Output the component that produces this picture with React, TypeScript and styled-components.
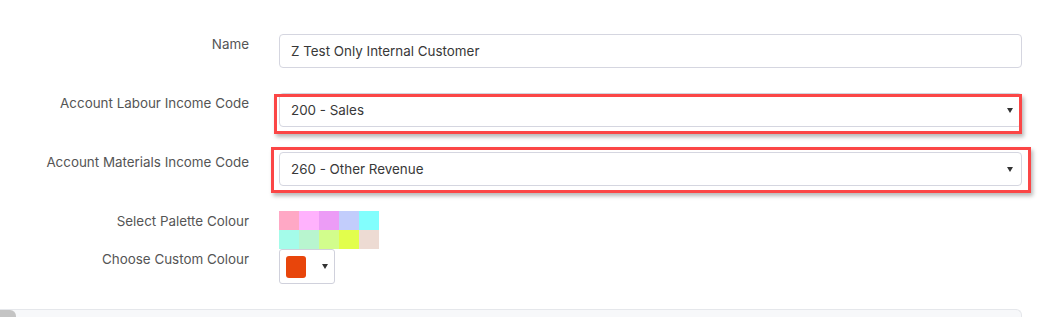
import styled, { createGlobalStyle } from 'styled-components';

const GlobalStyle = createGlobalStyle`
  body {
    margin: 0;
    background: #ffffff;
    font-family: Inter, "Noto Sans", "Liberation Sans", sans-serif;
  }
`;

const StyledPage = styled.div`
  width: 1038px;
  height: 317px;
  overflow: hidden;
  display: flex;
  flex-direction: column;
`;

const StyledForm = styled.form`
  padding: 34px 16px 0 0;
  display: flex;
  flex-direction: column;
  gap: 25px;
`;

const StyledRow = styled.div`
  display: grid;
  grid-template-columns: 249px 1fr;
  column-gap: 30px;
  align-items: start;
`;

const StyledStack = styled.div`
  display: flex;
  flex-direction: column;
`;

const StyledLabel = styled.label`
  font-size: 13.4px;
  line-height: 20px;
  color: #555555;
  text-align: right;
  white-space: nowrap;
`;

const StyledField = styled.div`
  position: relative;
  height: 34px;
  box-sizing: border-box;
  border: 1px solid #d5d6e0;
  border-radius: 4px;
  background: #fff;
  display: flex;
  align-items: center;
  padding: 0 11px;
  font-size: 13.4px;
  color: #383838;
`;

const StyledValue = styled.span`
  flex: 1;
`;

const StyledCaret = styled.span`
  width: 0;
  height: 0;
  border-left: 3.5px solid transparent;
  border-right: 3.5px solid transparent;
  border-top: 5px solid #333;
  margin-right: -3px;
`;

const StyledHighlight = styled.div<{ $l: number; $t: number; $r: number; $b: number }>`
  position: absolute;
  left: ${(p) => p.$l}px;
  top: ${(p) => p.$t}px;
  right: ${(p) => p.$r}px;
  bottom: ${(p) => p.$b}px;
  border: 3px solid #fb4646;
  box-shadow: 2px 3px 4px rgba(0, 0, 0, 0.28);
  pointer-events: none;
`;

const StyledPalette = styled.div`
  display: grid;
  grid-template-columns: repeat(5, 20px);
  grid-auto-rows: 19px;
`;

const StyledSwatch = styled.div<{ $color: string }>`
  background: ${(p) => p.$color};
`;

const StyledColourButton = styled.div`
  width: 56px;
  height: 35px;
  box-sizing: border-box;
  border: 1px solid #d0d1dc;
  border-radius: 3px;
  display: flex;
  align-items: center;
  padding: 0 0 0 6px;
  gap: 16px;
`;

const StyledChip = styled.div`
  width: 20px;
  height: 22px;
  background: #e8450b;
  border-radius: 3px;
`;

const StyledFooter = styled.div`
  margin-top: auto;
  height: 8px;
  width: 1022px;
  box-sizing: border-box;
  background: #f7f8fa;
  border-top: 1px solid #e5e7eb;
  border-right: 1px solid #e5e7eb;
  border-top-right-radius: 6px;
  position: relative;
`;

const StyledThumb = styled.div`
  position: absolute;
  left: 0;
  top: 0;
  width: 16px;
  height: 10px;
  background: #c4c4c4;
  border-top-right-radius: 6px;
`;

const palette = [
  '#ffa8c5', '#ffb2fd', '#ec9cf6', '#c2cdfc', '#82fefd',
  '#a4fcea', '#b8f5cf', '#d2fd8c', '#e2fe4c', '#eddbd3',
];

const App = () => {
  return (
    <StyledPage>
      <GlobalStyle />
      <StyledForm>
        <StyledRow>
          <StyledLabel>Name</StyledLabel>
          <StyledField>
            <StyledValue>Z Test Only Internal Customer</StyledValue>
          </StyledField>
        </StyledRow>
        <StyledRow>
          <StyledLabel>Account Labour Income Code</StyledLabel>
          <StyledField>
            <StyledValue>200 - Sales</StyledValue>
            <StyledCaret />
            <StyledHighlight $l={-6} $t={0} $r={-1} $b={-8} />
          </StyledField>
        </StyledRow>
        <StyledRow>
          <StyledLabel>Account Materials Income Code</StyledLabel>
          <StyledField>
            <StyledValue>260 - Other Revenue</StyledValue>
            <StyledCaret />
            <StyledHighlight $l={-9} $t={-6} $r={-10} $b={-8} />
          </StyledField>
        </StyledRow>
        <StyledRow>
          <StyledStack>
            <StyledLabel>Select Palette Colour</StyledLabel>
            <StyledLabel style={{ marginTop: 18 }}>Choose Custom Colour</StyledLabel>
          </StyledStack>
          <StyledStack>
            <StyledPalette>
              {palette.map((c) => (
                <StyledSwatch key={c} $color={c} />
              ))}
            </StyledPalette>
            <StyledColourButton>
              <StyledChip />
              <StyledCaret />
            </StyledColourButton>
          </StyledStack>
        </StyledRow>
      </StyledForm>
      <StyledFooter>
        <StyledThumb />
      </StyledFooter>
    </StyledPage>
  );
};

export default App;
